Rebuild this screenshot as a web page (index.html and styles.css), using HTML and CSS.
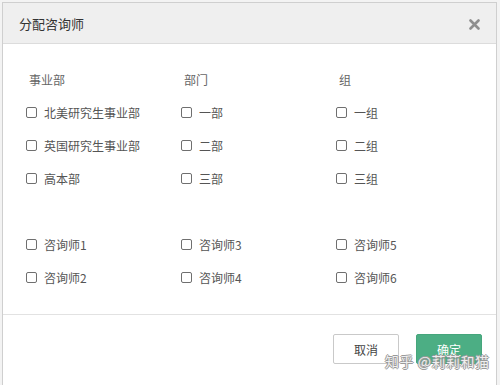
FILE: index.html
```html
<!DOCTYPE html>
<html lang="zh">
<head>
<meta charset="utf-8">
<link rel="stylesheet" href="styles.css">
</head>
<body>
<div class="dialog">
  <div class="header">
    <span class="title">分配咨询师</span>
    <svg class="close" width="11" height="11" viewBox="0 0 11 11"><path d="M1.5 1.5L9.5 9.5M9.5 1.5L1.5 9.5" stroke="#8f8f8f" stroke-width="2.6" stroke-linecap="round"/></svg>
  </div>
  <div class="body">
    <div class="grid">
      <div class="cell head">事业部</div>
      <div class="cell head">部门</div>
      <div class="cell head">组</div>
      <label class="cell"><span class="box"></span>北美研究生事业部</label>
      <label class="cell"><span class="box"></span>一部</label>
      <label class="cell"><span class="box"></span>一组</label>
      <label class="cell"><span class="box"></span>英国研究生事业部</label>
      <label class="cell"><span class="box"></span>二部</label>
      <label class="cell"><span class="box"></span>二组</label>
      <label class="cell"><span class="box"></span>高本部</label>
      <label class="cell"><span class="box"></span>三部</label>
      <label class="cell"><span class="box"></span>三组</label>
      <div class="cell spacer"></div>
      <div class="cell spacer"></div>
      <div class="cell spacer"></div>
      <label class="cell"><span class="box"></span>咨询师1</label>
      <label class="cell"><span class="box"></span>咨询师3</label>
      <label class="cell"><span class="box"></span>咨询师5</label>
      <label class="cell"><span class="box"></span>咨询师2</label>
      <label class="cell"><span class="box"></span>咨询师4</label>
      <label class="cell"><span class="box"></span>咨询师6</label>
    </div>
  </div>
  <div class="footer">
    <button class="btn cancel">取消</button>
    <button class="btn ok">确定</button>
    <span class="watermark">知乎 @莉莉和猫</span>
  </div>
</div>
</body>
</html>
```
FILE: styles.css
```css
html, body {
  margin: 0;
  padding: 0;
}
body {
  width: 500px;
  height: 385px;
  overflow: hidden;
  background: #f3f3f3;
  font-family: "Noto Sans CJK SC", "Noto Sans", sans-serif;
  color: #555;
}
.dialog {
  margin: 2px 0 0 2px;
  width: 493px;
  border: 1px solid #cfcfcf;
  background: #fff;
  height: 400px;
}
.header {
  height: 40px;
  background: #efefef;
  border-bottom: 1px solid #dcdcdc;
  display: flex;
  align-items: center;
  justify-content: space-between;
  padding: 0 16px 0 16px;
}
.title {
  font-size: 13px;
  color: #333;
}
.close {
  display: block;
  margin-top: 2px;
}
.body {
  padding: 19px 0 20px 23px;
  border-bottom: 1px solid #e2e2e2;
}
.grid {
  display: grid;
  grid-template-columns: 155px 155px 155px;
  grid-auto-rows: 33px;
}
.cell {
  display: flex;
  align-items: center;
  font-size: 12px;
  color: #555;
  white-space: nowrap;
}
.head {
  padding-left: 3px;
  color: #666;
}
.box {
  width: 9px;
  height: 9px;
  border: 1px solid #6f6f6f;
  border-radius: 2px;
  margin-right: 7px;
  flex: none;
}
.footer {
  position: relative;
  display: flex;
  justify-content: flex-end;
  gap: 17px;
  padding: 19px 14px 0 0;
}
.btn {
  height: 30px;
  width: 66px;
  font-family: inherit;
  font-size: 12px;
  border-radius: 2px;
  padding: 0;
}
.cancel {
  background: #fff;
  border: 1px solid #c9c9c9;
  color: #444;
}
.ok {
  background: #4cae84;
  border: 1px solid #46a67c;
  color: #fff;
}
.watermark {
  position: absolute;
  left: 382px;
  top: 36px;
  font-size: 14px;
  white-space: nowrap;
  color: rgba(255,255,255,0.85);
  letter-spacing: 0.5px;
  text-shadow: -1px 0 #9a9a9a, 1px 0 #9a9a9a, 0 -1px #9a9a9a, 0 1px #9a9a9a;
}
```
